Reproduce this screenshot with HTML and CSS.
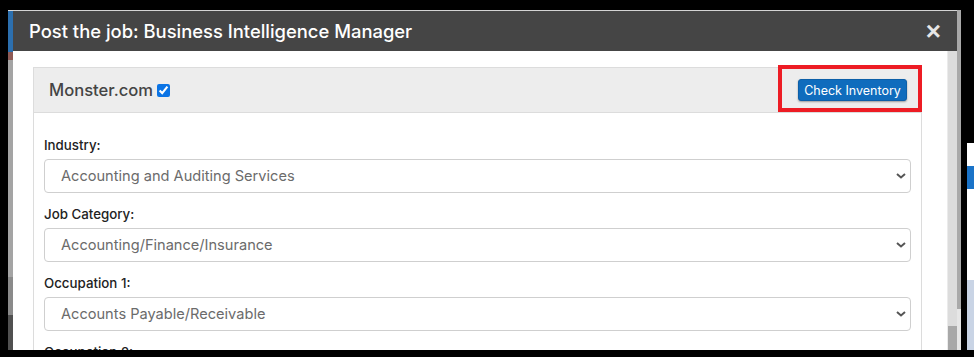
FILE: index.html
```html
<!DOCTYPE html>
<html lang="en">
<head>
  <meta charset="UTF-8" />
  <title>Post the job</title>
  <link rel="stylesheet" href="styles.css">
</head>
<body>
  <div class="frame">
    <div class="page-left"></div>
    <div class="modal">
      <div class="modal-header">
        <h1 class="modal-title">Post the job: Business Intelligence Manager</h1>
        <button class="close" aria-label="Close">&times;</button>
      </div>
      <div class="modal-body">
        <div class="modal-scroll">
          <div class="panel">
            <div class="panel-heading">
              <label class="board">Monster.com <input type="checkbox" checked></label>
              <span class="highlight"><button class="btn-check">Check Inventory</button></span>
            </div>
            <div class="panel-body">
              <div class="form-group">
                <label class="field-label">Industry:</label>
                <div class="select-wrap">
                  <select><option>Accounting and Auditing Services</option></select>
                  <svg class="chevron" viewBox="0 0 10 6"><path d="M1 1l4 3.5L9 1" /></svg>
                </div>
              </div>
              <div class="form-group">
                <label class="field-label">Job Category:</label>
                <div class="select-wrap">
                  <select><option>Accounting/Finance/Insurance</option></select>
                  <svg class="chevron" viewBox="0 0 10 6"><path d="M1 1l4 3.5L9 1" /></svg>
                </div>
              </div>
              <div class="form-group">
                <label class="field-label">Occupation 1:</label>
                <div class="select-wrap">
                  <select><option>Accounts Payable/Receivable</option></select>
                  <svg class="chevron" viewBox="0 0 10 6"><path d="M1 1l4 3.5L9 1" /></svg>
                </div>
              </div>
              <div class="form-group">
                <label class="field-label">Occupation 2:</label>
              </div>
            </div>
          </div>
        </div>
        <div class="scrollbar"><div class="thumb"></div></div>
      </div>
    </div>
    <div class="modal-edge"></div>
    <div class="gutter"></div>
    <div class="page-right"></div>
  </div>
</body>
</html>
```

FILE: styles.css
```css
body {
  margin: 0;
  background: #000;
  font-family: 'Inter', sans-serif;
  padding: 10px 0 7px 8px;
  height: 357px;
  box-sizing: border-box;
  overflow: hidden;
}

.frame {
  display: flex;
  height: 340px;
}

.page-left {
  width: 5px;
  background: linear-gradient(#d8d8d8 0 1px, #2c6fae 1px 42px, #8e5a55 42px 50px, #a4a4a4 50px 267px, #8a8a8a 267px 305px, #505050 305px);
}

.modal {
  width: 944px;
  display: flex;
  flex-direction: column;
  border-top: 1px solid #d4d4d4;
}

.modal-header {
  height: 40px;
  background: #454545;
  display: flex;
  align-items: center;
  justify-content: space-between;
  padding: 0 16px;
  flex-shrink: 0;
}

.modal-title {
  margin: 0;
  color: #fff;
  font-size: 18.4px;
  font-weight: 500;
}

.close {
  background: none;
  border: none;
  color: #e6e6e6;
  font-size: 26px;
  font-weight: 700;
  padding: 0;
  line-height: 1;
}

.modal-body {
  flex: 1;
  display: flex;
  background: #fff;
  overflow: hidden;
}

.modal-scroll {
  flex: 1;
  padding: 16px 25px 0 20px;
}

.scrollbar {
  width: 10px;
  box-sizing: border-box;
  background: #dcdcdc;
  border-left: 1px solid #ebebeb;
  display: flex;
  flex-direction: column;
  justify-content: flex-end;
}

.thumb {
  height: 24px;
  background: #a8a8a8;
}

.panel {
  border: 1px solid #dcdcdc;
}

.panel-heading {
  height: 44px;
  background: #ededed;
  border-bottom: 1px solid #dcdcdc;
  display: flex;
  align-items: center;
  justify-content: space-between;
  padding: 0 14px 0 15px;
}

.board {
  font-size: 16.6px;
  font-weight: 500;
  color: #444;
  display: flex;
  align-items: center;
  gap: 4px;
}

.board input {
  width: 13px;
  height: 13px;
  margin: 0;
  accent-color: #0b74e5;
}

.highlight {
  position: relative;
}

.highlight::after {
  content: '';
  position: absolute;
  left: -20px;
  right: -15px;
  top: -14px;
  bottom: -11px;
  border: 4px solid #ed1c24;
}

.btn-check {
  display: block;
  height: 22px;
  width: 109px;
  padding: 0;
  background: #0f6cbd;
  border: 1px solid #0c5fa8;
  border-radius: 3px;
  color: #fff;
  font-family: inherit;
  font-size: 12.5px;
  box-shadow: 0 1px 2px rgba(0, 0, 0, 0.35);
}

.panel-body {
  padding: 22px 10px 0;
}

.form-group {
  margin-bottom: 11px;
}

.field-label {
  display: block;
  font-size: 13.3px;
  font-weight: 500;
  color: #222;
  line-height: 20px;
  margin-bottom: 4px;
}

.select-wrap {
  position: relative;
}

.select-wrap select {
  display: block;
  width: 100%;
  height: 34px;
  appearance: none;
  border: 1px solid #cfcfcf;
  border-radius: 4px;
  background: #fff;
  padding: 0 16px;
  font-family: inherit;
  font-size: 14.6px;
  color: #6b6b6b;
}

.chevron {
  position: absolute;
  right: 5px;
  top: 14px;
  width: 10px;
  height: 6px;
  fill: none;
  stroke: #555;
  stroke-width: 2;
}

.modal-edge {
  width: 4px;
  background: linear-gradient(#a9a9a9 0 299px, #e6e6e6 299px);
}

.gutter {
  width: 6px;
}

.page-right {
  width: 7px;
  background: linear-gradient(#000 0 133px, #fff 133px 156px, #1a73c8 156px 179px, #fff 179px 270px, #c9d4e5 270px);
}
```
